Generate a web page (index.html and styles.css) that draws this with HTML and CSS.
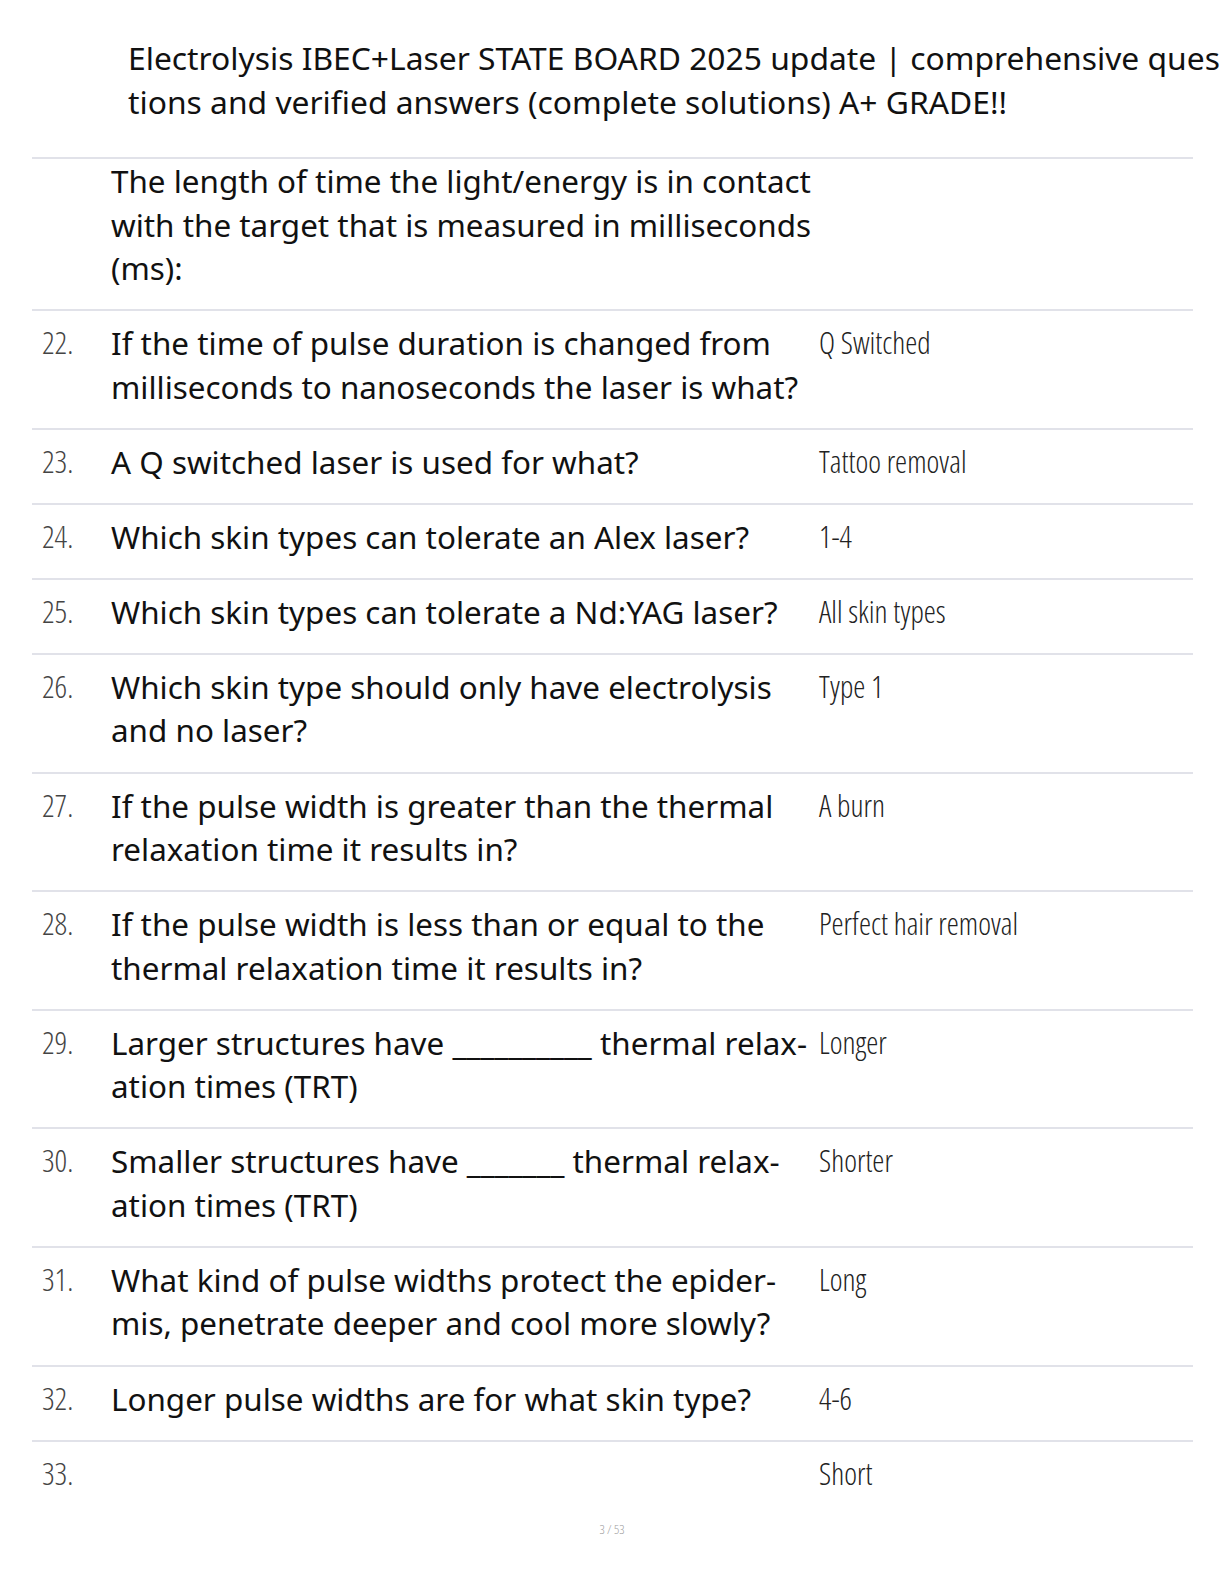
FILE: index.html
```html
<!DOCTYPE html>
<html lang="en">
<head>
<meta charset="utf-8">
<title>Electrolysis IBEC+Laser STATE BOARD 2025</title>
<link rel="stylesheet" href="styles.css">
</head>
<body>
<div class="page">
  <h1 class="doc-title">
    <span class="title-line">Electrolysis IBEC+Laser STATE BOARD 2025 update | comprehensive ques</span>
    <span class="title-line">tions and verified answers (complete solutions) A+ GRADE!!</span>
  </h1>
  <div class="qa-list">
    <div class="qa-row qa-row--first">
      <div class="qa-num"></div>
      <div class="qa-question">The length of time the light/energy is in contact with the target that is measured in milliseconds (ms):</div>
      <div class="qa-answer"></div>
    </div>
    <div class="qa-row">
      <div class="qa-num">22.</div>
      <div class="qa-question">If the time of pulse duration is changed from milliseconds to nanoseconds the laser is what?</div>
      <div class="qa-answer">Q Switched</div>
    </div>
    <div class="qa-row">
      <div class="qa-num">23.</div>
      <div class="qa-question">A Q switched laser is used for what?</div>
      <div class="qa-answer">Tattoo removal</div>
    </div>
    <div class="qa-row">
      <div class="qa-num">24.</div>
      <div class="qa-question">Which skin types can tolerate an Alex laser?</div>
      <div class="qa-answer">1-4</div>
    </div>
    <div class="qa-row">
      <div class="qa-num">25.</div>
      <div class="qa-question">Which skin types can tolerate a Nd:YAG laser?</div>
      <div class="qa-answer">All skin types</div>
    </div>
    <div class="qa-row">
      <div class="qa-num">26.</div>
      <div class="qa-question">Which skin type should only have electrolysis and no laser?</div>
      <div class="qa-answer">Type 1</div>
    </div>
    <div class="qa-row">
      <div class="qa-num">27.</div>
      <div class="qa-question">If the pulse width is greater than the thermal relaxation time it results in?</div>
      <div class="qa-answer">A burn</div>
    </div>
    <div class="qa-row">
      <div class="qa-num">28.</div>
      <div class="qa-question">If the pulse width is less than or equal to the thermal relaxation time it results in?</div>
      <div class="qa-answer">Perfect hair removal</div>
    </div>
    <div class="qa-row">
      <div class="qa-num">29.</div>
      <div class="qa-question">Larger structures have __________ thermal relax&shy;ation times (TRT)</div>
      <div class="qa-answer">Longer</div>
    </div>
    <div class="qa-row">
      <div class="qa-num">30.</div>
      <div class="qa-question">Smaller structures have _______ thermal relax&shy;ation times (TRT)</div>
      <div class="qa-answer">Shorter</div>
    </div>
    <div class="qa-row">
      <div class="qa-num">31.</div>
      <div class="qa-question">What kind of pulse widths protect the epider&shy;mis, penetrate deeper and cool more slowly?</div>
      <div class="qa-answer">Long</div>
    </div>
    <div class="qa-row">
      <div class="qa-num">32.</div>
      <div class="qa-question">Longer pulse widths are for what skin type?</div>
      <div class="qa-answer">4-6</div>
    </div>
    <div class="qa-row qa-row--last">
      <div class="qa-num">33.</div>
      <div class="qa-question"></div>
      <div class="qa-answer">Short</div>
    </div>
  </div>
  <div class="page-footer">3 / 53</div>
</div>
</body>
</html>
```
FILE: styles.css
```css
html, body {
  margin: 0;
  padding: 0;
  background: #ffffff;
}

body {
  overflow: hidden;
  font-family: "Noto Sans", "Open Sans", sans-serif;
  color: #111111;
}

.page {
  width: 1224px;
  padding: 36px 0 0 32px;
  box-sizing: border-box;
}

.doc-title {
  margin: 0 0 34px 96px;
  font-size: 31.8px;
  font-weight: 400;
  line-height: 43.5px;
  color: #111111;
}

.title-line {
  display: block;
  white-space: nowrap;
}

.qa-list {
  width: 1161px;
}

.qa-row {
  display: grid;
  grid-template-columns: 69px 708px 1fr;
  padding: 10px 0 19.6px 10px;
  border-top: 2px solid #e1e2e9;
  font-size: 31.4px;
  line-height: 43.5px;
}

.qa-row--first {
  padding-top: 0;
}

.qa-num {
  font-family: "Open Sans", sans-serif;
  font-size: 31px;
  font-weight: 300;
  font-stretch: 75%;
  color: #444444;
}

.qa-question {
  color: #111111;
  hyphens: manual;
  padding-right: 4px;
}

.qa-answer {
  font-family: "Open Sans", sans-serif;
  font-size: 30.5px;
  font-weight: 300;
  font-stretch: 75%;
  color: #222222;
}

.page-footer {
  margin-top: 4px;
  text-align: center;
  font-family: "Open Sans", sans-serif;
  font-weight: 300;
  font-stretch: 75%;
  font-size: 13px;
  line-height: 20px;
  color: #a0a0a0;
  padding-right: 32px;
}
```
